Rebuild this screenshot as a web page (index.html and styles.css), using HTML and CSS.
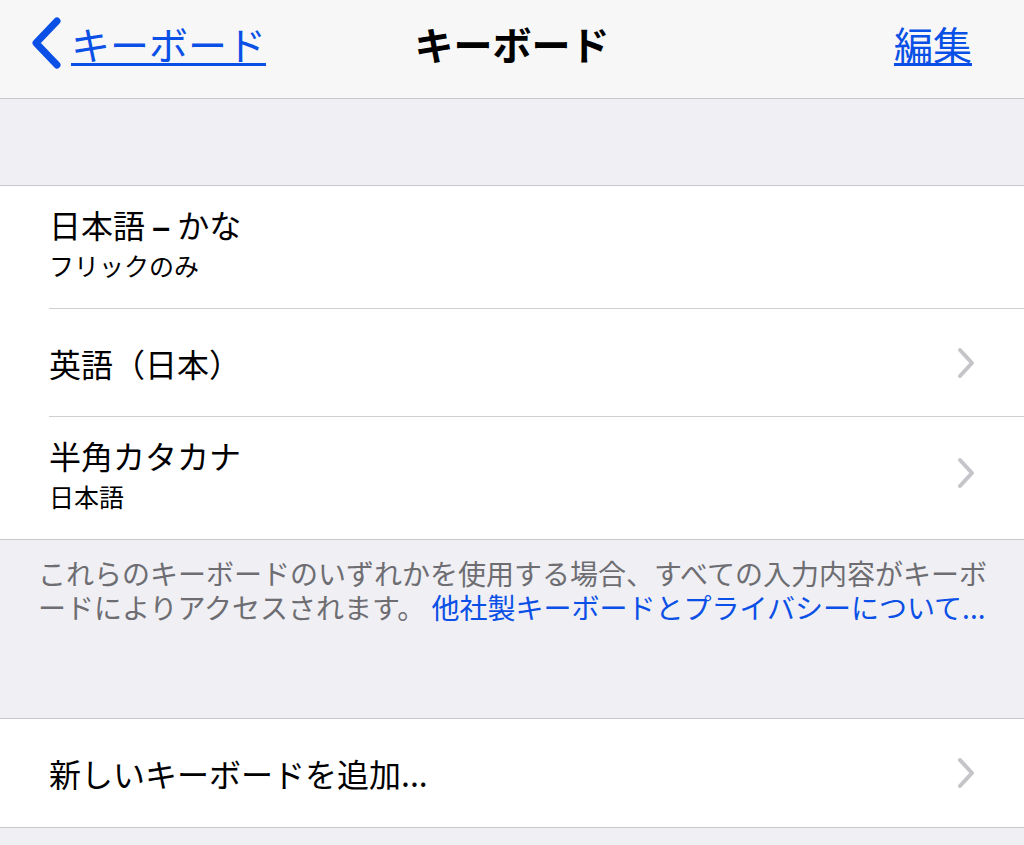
FILE: index.html
```html
<!DOCTYPE html>
<html lang="ja">
<head>
    <meta charset="UTF-8">
    <meta name="viewport" content="width=device-width, initial-scale=1.0">
    <title>キーボード</title>
    <link rel="stylesheet" href="styles.css">
</head>
<body>

<header class="navbar">
    <a class="nav-back" href="#">
        <svg class="back-chevron" width="32" height="54" viewBox="0 0 32 54">
            <polyline points="27,5 6,27 27,49" fill="none" stroke="currentColor" stroke-width="7" stroke-linecap="round" stroke-linejoin="round"/>
        </svg>
        <span class="nav-link">キーボード</span>
    </a>
    <h1 class="nav-title">キーボード</h1>
    <div class="nav-right">
        <a class="nav-link" href="#">編集</a>
    </div>
</header>

<div class="spacer"></div>

<section class="group">
    <div class="cell">
        <div class="cell-body cell-tall">
            <div class="cell-text">
                <div class="cell-title">日本語 <span class="dash">–</span> かな</div>
                <div class="cell-subtitle">フリックのみ</div>
            </div>
        </div>
    </div>
    <div class="cell">
        <div class="cell-body">
            <div class="cell-text">
                <div class="cell-title">英語（日本）</div>
            </div>
            <svg class="chevron" width="20" height="34" viewBox="0 0 20 34">
                <polyline points="4,4 16,17 4,30" fill="none" stroke="currentColor" stroke-width="4" stroke-linecap="round" stroke-linejoin="round"/>
            </svg>
        </div>
    </div>
    <div class="cell">
        <div class="cell-body cell-tall">
            <div class="cell-text">
                <div class="cell-title">半角カタカナ</div>
                <div class="cell-subtitle">日本語</div>
            </div>
            <svg class="chevron" width="20" height="34" viewBox="0 0 20 34">
                <polyline points="4,4 16,17 4,30" fill="none" stroke="currentColor" stroke-width="4" stroke-linecap="round" stroke-linejoin="round"/>
            </svg>
        </div>
    </div>
</section>

<p class="group-footer">
    これらのキーボードのいずれかを使用する場合、すべての入力内容がキーボードによりアクセスされます。 <a class="footer-link" href="#">他社製キーボードとプライバシーについて...</a>
</p>

<section class="group">
    <div class="cell">
        <div class="cell-body">
            <div class="cell-text">
                <div class="cell-title">新しいキーボードを追加...</div>
            </div>
            <svg class="chevron" width="20" height="34" viewBox="0 0 20 34">
                <polyline points="4,4 16,17 4,30" fill="none" stroke="currentColor" stroke-width="4" stroke-linecap="round" stroke-linejoin="round"/>
            </svg>
        </div>
    </div>
</section>

</body>
</html>
```

FILE: styles.css
```css
body {
    font-family: "Noto Sans CJK JP", "Noto Sans", sans-serif;
    background-color: #efeff4;
    color: #000;
    margin: 0;
    padding: 0;
}

.navbar {
    display: grid;
    grid-template-columns: 1fr auto 1fr;
    align-items: center;
    height: 86px;
    padding-bottom: 12px;
    background-color: #f7f7f7;
    border-bottom: 1px solid #c8c7cc;
}

.nav-back {
    display: flex;
    align-items: center;
    padding-left: 30px;
    color: #0a50e6;
    text-decoration: none;
}

.back-chevron {
    margin-right: 9px;
}

.nav-link {
    color: #0a50e6;
    font-size: 39px;
    text-decoration: underline;
    text-underline-offset: 3px;
}

.nav-title {
    margin: 0;
    font-size: 39px;
    font-weight: bold;
}

.nav-right {
    display: flex;
    justify-content: flex-end;
    padding-right: 52px;
}

.spacer {
    height: 86px;
}

.group {
    background-color: #fff;
    border-top: 1px solid #c8c7cc;
    border-bottom: 1px solid #c8c7cc;
}

.cell {
    padding-left: 49px;
}

.cell-body {
    display: flex;
    align-items: center;
    min-height: 108px;
    padding-right: 48px;
    border-bottom: 1px solid #cfcfd3;
    box-sizing: border-box;
}

.cell:last-child .cell-body {
    border-bottom: none;
}

.cell-tall {
    min-height: 122px;
    padding-top: 18px;
    padding-bottom: 28px;
}

.cell-text {
    flex: 1;
}

.cell-title {
    font-size: 32px;
    line-height: 40px;
}

.dash {
    font-family: "Liberation Sans", sans-serif;
    font-weight: bold;
    line-height: 0;
}

.cell-subtitle {
    margin-top: 6px;
    font-size: 25px;
    line-height: 30px;
}

.chevron {
    color: #c4c4c9;
}

.group-footer {
    margin: 0;
    height: 162px;
    padding: 16px 24px 0 38px;
    font-size: 28px;
    line-height: 34px;
    color: #6d6d72;
    line-break: loose;
}

.footer-link {
    color: #0a50e6;
    text-decoration: none;
}
```
